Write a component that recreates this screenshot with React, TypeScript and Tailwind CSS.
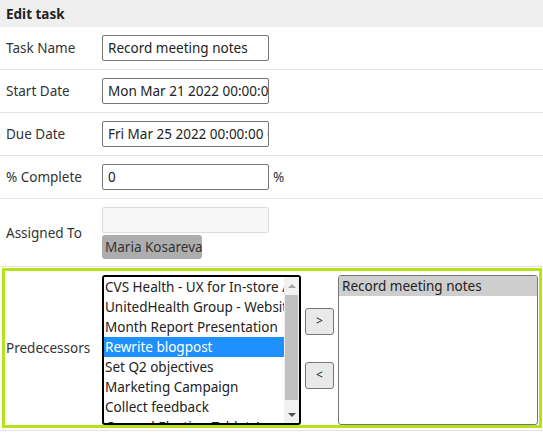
import React from "react";

// Rows of the task form
const textRows = [
  { label: "Task Name", value: "Record meeting notes" },
  { label: "Start Date", value: "Mon Mar 21 2022 00:00:00 GMT" },
  { label: "Due Date", value: "Fri Mar 25 2022 00:00:00 GMT" },
];

const tasks = [
  "CVS Health - UX for In-store Apps",
  "UnitedHealth Group - Website",
  "Month Report Presentation",
  "Rewrite blogpost",
  "Set Q2 objectives",
  "Marketing Campaign",
  "Collect feedback",
  "General Election Tablet App",
];

const Label = ({ children }: { children: React.ReactNode }) => (
  <div className="w-[102px] shrink-0 pl-[6px] text-[#333]">{children}</div>
);

export default function App() {
  return (
    <div className="w-[543px] h-[435px] overflow-hidden bg-white text-[13.5px] leading-[20px] text-[#222] font-['Noto_Sans','Open_Sans',sans-serif]">
      {/* Header */}
      <div className="h-[27px] bg-[#efefef] pl-[6px] flex items-center font-bold text-[#222]">
        Edit task
      </div>

      {textRows.map((row) => (
        <div
          key={row.label}
          className="flex items-center py-2 border-b border-[#e3e3e3]"
        >
          <Label>{row.label}</Label>
          <div className="w-[167px] h-[26px] border border-[#767676] rounded-[2px] px-[5px] flex items-center overflow-hidden whitespace-nowrap">
            {row.value}
          </div>
        </div>
      ))}

      {/* Percent */}
      <div className="flex items-center py-2 border-b border-[#e3e3e3]">
        <Label>% Complete</Label>
        <div className="w-[167px] h-[26px] border border-[#767676] rounded-[2px] px-[5px] flex items-center">
          0
        </div>
        <span className="ml-[4px] text-[#333]">%</span>
      </div>

      {/* Assigned to */}
      <div className="flex items-center pt-2 pb-[7px] border-b border-[#e3e3e3]">
        <Label>Assigned To</Label>
        <div className="flex flex-col gap-[2px]">
          <div className="w-[167px] h-[26px] border border-[#dcdcdc] rounded-[2px] bg-[#f7f7f7]" />
          <div className="w-[100px] h-[24px] rounded-[3px] bg-[#adadad] px-[3px] flex items-center whitespace-nowrap overflow-hidden text-[#333]">
            Maria Kosareva
          </div>
        </div>
      </div>

      {/* Predecessors */}
      <div className="pt-[1px] pb-[2px] pl-[2px] pr-[1px] border-b border-[#e3e3e3]">
        <div className="h-[160px] border-[3px] border-[#b5e21b] flex items-center">
          <div className="w-[97px] shrink-0 pl-[1px] text-[#333]">Predecessors</div>
          <div className="self-start mt-[4px] w-[199px] h-[150px] border-2 border-black rounded-[3px] flex overflow-hidden">
            <div className="flex-1 overflow-hidden whitespace-nowrap">
              {tasks.map((t) => (
                <div
                  key={t}
                  className={`h-[20px] pl-[1px] ${
                    t === "Rewrite blogpost" ? "bg-[#1e90ff] text-white" : ""
                  }`}
                >
                  {t}
                </div>
              ))}
            </div>
            <div className="w-[15px] bg-[#f1f1f1] flex flex-col items-center">
              <div className="h-[17px] flex items-center justify-center">
                <div className="w-0 h-0 border-x-[4px] border-x-transparent border-b-[4px] border-b-[#a3a3a3]" />
              </div>
              <div className="w-[13px] mt-[1px] h-[105px] bg-[#c1c1c1]" />
              <div className="flex-1" />
              <div className="h-[17px] flex items-center justify-center">
                <div className="w-0 h-0 border-x-[4px] border-x-transparent border-t-[4px] border-t-[#505050]" />
              </div>
            </div>
          </div>

          <div className="flex flex-col gap-[27px] mx-[4px]">
            <button className="w-[29px] h-[27px] bg-[#e9e9e9] border border-[#767676] rounded-[3px] text-[12px] text-[#222] flex items-center justify-center">
              &gt;
            </button>
            <button className="w-[29px] h-[27px] bg-[#e9e9e9] border border-[#767676] rounded-[3px] text-[12px] text-[#222] flex items-center justify-center">
              &lt;
            </button>
          </div>

          <div className="self-start mt-[4px] w-[200px] h-[150px] border border-[#767676] rounded-[3px] overflow-hidden">
            <div className="h-[20px] bg-[#cecece] pl-[3px] whitespace-nowrap">
              Record meeting notes
            </div>
          </div>
        </div>
      </div>
    </div>
  );
}
